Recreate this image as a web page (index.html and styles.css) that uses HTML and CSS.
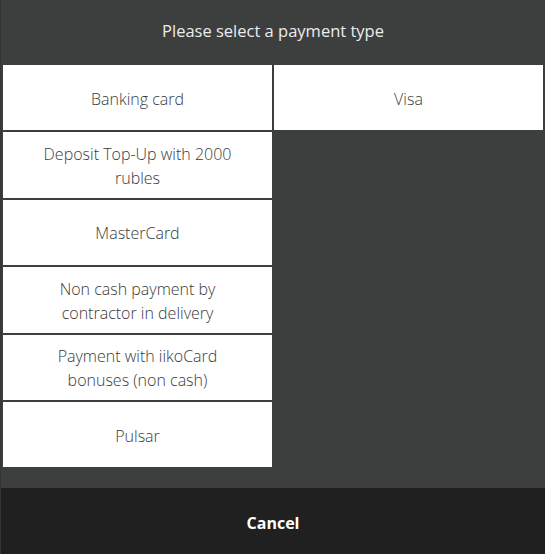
FILE: index.html
```html
<!DOCTYPE html>
<html lang="en">
<head>
    <meta charset="UTF-8">
    <title>Payment type</title>
    <link rel="stylesheet" href="styles.css">
</head>
<body>
    <div class="dialog">
        <div class="title">Please select a payment type</div>

        <div class="content">
            <div class="types">
                <button class="type">Banking card</button>
                <button class="type visa">Visa</button>
                <button class="type">Deposit Top-Up with 2000 rubles</button>
                <button class="type">MasterCard</button>
                <button class="type">Non cash payment by contractor in delivery</button>
                <button class="type">Payment with iikoCard bonuses (non cash)</button>
                <button class="type">Pulsar</button>
            </div>
        </div>

        <div class="footer">
            <button class="cancel">Cancel</button>
        </div>
    </div>
</body>
</html>
```

FILE: styles.css
```css
* {
    margin: 0;
    padding: 0;
    box-sizing: border-box;
}

body {
    font-family: 'Open Sans', 'Noto Sans', sans-serif;
    background-color: #3d3f3f;
    color: #ffffff;
}

.dialog {
    height: 554px;
    display: flex;
    flex-direction: column;
    border-left: 1px solid #353737;
}

.title {
    height: 65px;
    display: flex;
    justify-content: center;
    align-items: center;
    padding-bottom: 4px;
    font-size: 16.5px;
    color: #ececec;
}

.content {
    flex: 1;
    padding: 0 2px;
}

.types {
    display: grid;
    grid-template-columns: 1fr 1fr;
    grid-auto-rows: 65.4px;
    gap: 2px;
}

/* everything sits in the first column, only Visa goes right */
.type {
    grid-column: 1;
    background-color: #ffffff;
    border: none;
    font-family: inherit;
    font-size: 16px;
    font-weight: 300;
    line-height: 24px;
    color: #3a3a3a;
    padding: 2px 30px 0 30px;
    cursor: pointer;
}

.type.visa {
    grid-column: 2;
    grid-row: 1;
}

.type:hover {
    background-color: #f2f2f2;
}

.footer {
    height: 66px;
    background-color: #202020;
    display: flex;
    justify-content: center;
    align-items: center;
    padding-top: 3px;
}

.cancel {
    background: none;
    border: none;
    color: #ffffff;
    font-family: inherit;
    font-size: 16px;
    font-weight: bold;
    cursor: pointer;
}
```
